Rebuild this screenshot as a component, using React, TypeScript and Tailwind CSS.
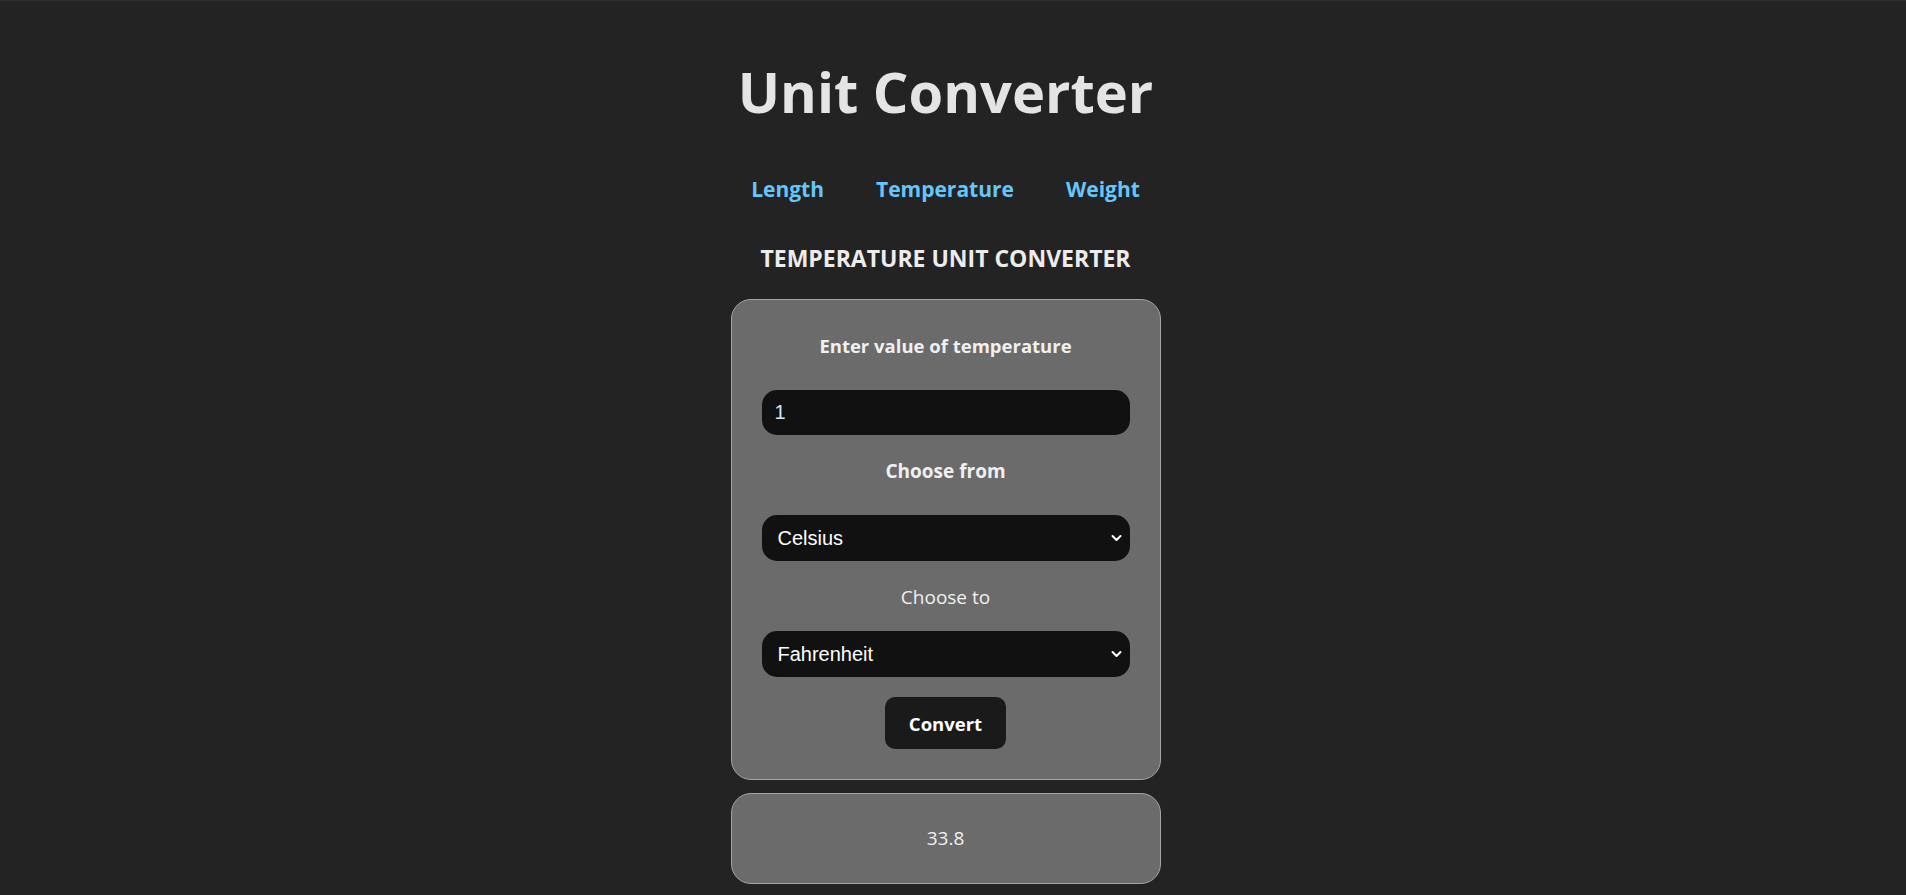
import React, { useState } from 'react';

const font = { fontFamily: '"Open Sans", "Noto Sans", sans-serif' };

function Chevron() {
  return (
    <svg className="pointer-events-none absolute right-[8px] top-1/2 h-[8px] w-[11px] -translate-y-1/2" viewBox="0 0 11 8" fill="none">
      <path d="M1.5 2 L5.5 6 L9.5 2" stroke="#ffffff" strokeWidth="2" strokeLinecap="round" strokeLinejoin="round" />
    </svg>
  );
}

function UnitSelect({ value, onChange, options }: { value: string; onChange: (v: string) => void; options: string[] }) {
  return (
    <div className="relative w-full">
      <select
        value={value}
        onChange={(e) => onChange(e.target.value)}
        className="h-[46px] w-full appearance-none rounded-[15px] bg-[#111111] pl-[16px] text-[20px] text-white outline-none"
        style={{ fontFamily: '"Liberation Sans", Arial, sans-serif' }}
      >
        {options.map((o) => (
          <option key={o} value={o}>{o}</option>
        ))}
      </select>
      <Chevron />
    </div>
  );
}

export default function App() {
  const [value, setValue] = useState('1');
  const [from, setFrom] = useState('Celsius');
  const [to, setTo] = useState('Fahrenheit');
  const [result, setResult] = useState('33.8');
  const units = ['Celsius', 'Fahrenheit', 'Kelvin'];

  const convert = () => {
    const v = parseFloat(value);
    if (isNaN(v)) return;
    let c = v;
    if (from === 'Fahrenheit') c = (v - 32) * 5 / 9;
    if (from === 'Kelvin') c = v - 273.15;
    let out = c;
    if (to === 'Fahrenheit') out = c * 9 / 5 + 32;
    if (to === 'Kelvin') out = c + 273.15;
    setResult(String(Math.round(out * 100) / 100));
  };

  return (
    <div className="min-h-screen border-t border-[#2e2e2e] bg-[#232323] pr-[15px] text-[#e6e6e6]" style={font}>
      <div className="flex flex-col items-center">
        <h1 className="mt-[52px] text-[56px] font-bold leading-[76px] text-[#e4e4e4]">Unit Converter</h1>

        <nav className="mt-[45px] flex gap-[52px] text-[21px] font-bold leading-[30px] text-[#66c6fb]">
          <a href="#">Length</a>
          <a href="#">Temperature</a>
          <a href="#">Weight</a>
        </nav>

        <h2 className="mt-[39px] text-[23px] font-bold leading-[30px] text-[#ececec]">TEMPERATURE UNIT CONVERTER</h2>

        <div className="mt-[26px] flex w-[430px] flex-col items-center rounded-[20px] border border-[#a3a3a3] bg-[#6b6b6b] px-[30px] pb-[30px] pt-[34px]">
          <p className="text-[18.5px] font-bold leading-[24px] text-[#f0f0f0]">Enter value of temperature</p>
          <input
            value={value}
            onChange={(e) => setValue(e.target.value)}
            className="mt-[32px] h-[45px] w-full rounded-[15px] bg-[#111111] pl-[13px] text-[20px] text-[#cfeaff] outline-none"
            style={{ fontFamily: '"Liberation Sans", Arial, sans-serif' }}
          />
          <p className="mt-[24px] text-[19px] font-bold leading-[24px] text-[#f0f0f0]">Choose from</p>
          <div className="mt-[32px] w-full">
            <UnitSelect value={from} onChange={setFrom} options={units} />
          </div>
          <p className="mt-[24px] text-[19px] leading-[24px] text-[#f0f0f0]">Choose to</p>
          <div className="mt-[22px] w-full">
            <UnitSelect value={to} onChange={setTo} options={units} />
          </div>
          <button
            onClick={convert}
            className="mt-[20px] h-[52px] w-[121px] rounded-[10px] bg-[#1a1a1a] pt-[2px] text-[18.5px] font-bold text-white"
          >
            Convert
          </button>
        </div>

        <div className="mt-[13px] flex h-[91px] w-[430px] items-center justify-center rounded-[20px] border border-[#a3a3a3] bg-[#6b6b6b]">
          <span className="text-[19px] text-[#f0f0f0]">{result}</span>
        </div>
      </div>
    </div>
  );
}
